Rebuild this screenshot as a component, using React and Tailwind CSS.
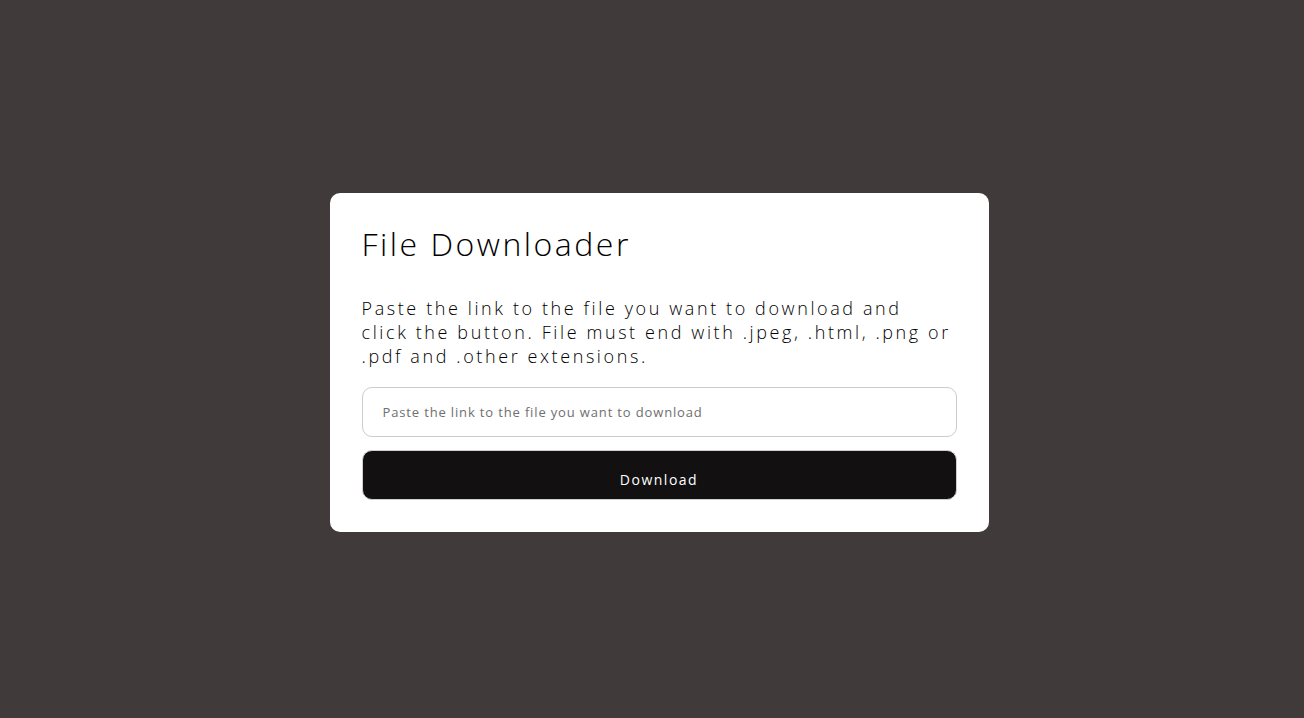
// App.jsx — file downloader card

import { useState } from 'react';

export default function App() {
  const [url, setUrl] = useState('');

  const handleSubmit = (e) => {
    e.preventDefault();
  };

  return (
    <div
      className="min-h-screen bg-[#403b3a] flex items-center justify-center"
      style={{ fontFamily: '"Open Sans", "DejaVu Sans", sans-serif' }}
    >
      <div className="w-[659px] bg-white rounded-[10px] p-8 mt-[7px] ml-[14px]">
        <h1 className="text-[32px] leading-[38px] font-light text-black tracking-[2.5px]">
          File Downloader
        </h1>

        <p className="mt-[33px] text-[18px] leading-6 font-light text-black tracking-[2.6px]">
          Paste the link to the file you want to download and
          <br />
          click the button. File must end with .jpeg, .html, .png or
          <br />
          .pdf and .other extensions.
        </p>

        <form onSubmit={handleSubmit} className="mt-[19px] flex flex-col gap-[13px]">
          <input
            type="text"
            value={url}
            onChange={(e) => setUrl(e.target.value)}
            placeholder="Paste the link to the file you want to download"
            className="h-[50px] w-full px-5 border border-[#cccccc] rounded-[10px] text-[13px] tracking-[0.85px] text-[#333] placeholder:text-[#6f6f6f] outline-none"
          />
          <button
            type="submit"
            className="h-[50px] w-full bg-[#121010] border border-[#d0d0d0] rounded-[10px] text-white text-[14px] tracking-[1.5px] pt-[8px]"
          >
            Download
          </button>
        </form>
      </div>
    </div>
  );
}
